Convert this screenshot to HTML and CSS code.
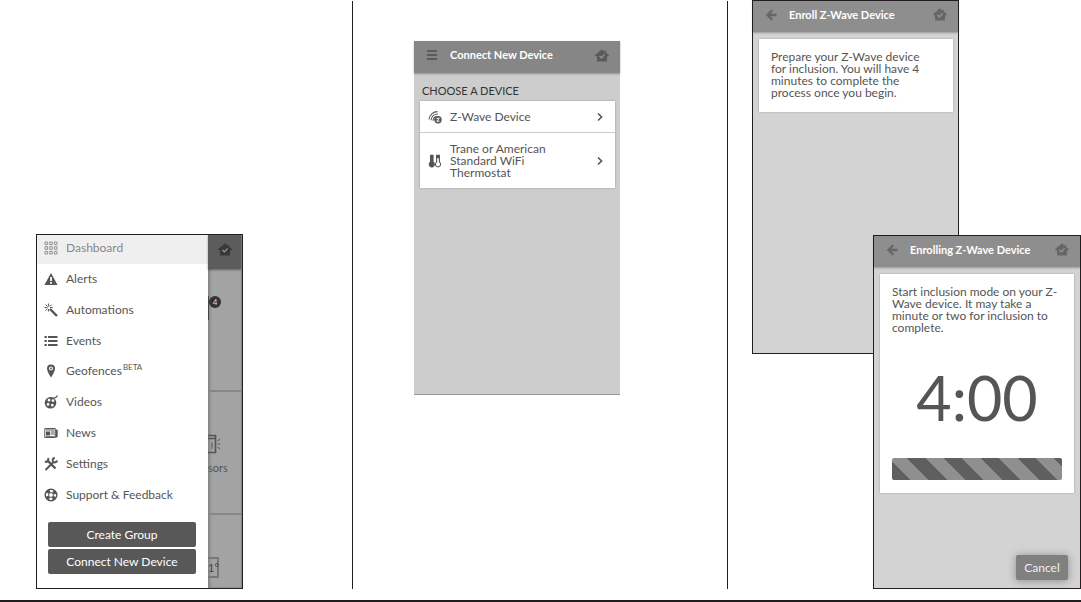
FILE: index.html
```
<!DOCTYPE html>
<html lang="en">
<head>
  <meta charset="UTF-8">
  <meta name="viewport" content="width=device-width, initial-scale=1.0">
  <title>Enroll a Z-Wave Device</title>
  <link rel="stylesheet" href="styles.css">
</head>
<body>

<!-- Shared icons -->
<svg class="sprite" aria-hidden="true">
  <symbol id="home" viewBox="0 0 14 13">
    <path fill="currentColor" d="M7 .300.200 6v1.200H2v5.300h10V7.200h1.800V6L11 3.700V1.800H9.800v.9z"/>
    <path class="check" d="M4.500 7 6.400 8.800 9.600 5.400"/>
  </symbol>
  <symbol id="back" viewBox="0 0 12 12">
    <path fill="currentColor" d="M6.500.500 8 2 5.400 4.700H11.500v2.600H5.400L8 10 6.500 11.500.800 6z"/>
  </symbol>
  <symbol id="chevron" viewBox="0 0 6 10">
    <path fill="none" stroke="currentColor" stroke-width="1.600" d="M1 1.500 4.600 5 1 8.500"/>
  </symbol>
</svg>

<main class="steps">

  <section class="step step-menu">
    <div class="phone framed menu-phone">
      <div class="drawer">
        <nav class="menu">
          <a class="active" href="#dashboard">
            <svg viewBox="0 0 14 14"><g fill="none" stroke="currentColor" stroke-width="0.900"><path d="M1 1h2.600v2.600H1zM5.700 1h2.600v2.600H5.700zM10.400 1H13v2.600h-2.600zM1 5.700h2.600v2.600H1zM5.700 5.700h2.600v2.600H5.700zM10.400 5.700H13v2.600h-2.600zM1 10.400h2.600V13H1zM5.700 10.400h2.600V13H5.700zM10.400 10.400H13V13h-2.600z"/></g></svg>
            <span>Dashboard</span>
          </a>
          <a href="#alerts">
            <svg viewBox="0 0 14 14"><path fill="currentColor" fill-rule="evenodd" d="M7 1 13.600 13H.400zM6.100 5v4h1.800V5zM6.100 10v1.700h1.800V10z"/></svg>
            <span>Alerts</span>
          </a>
          <a href="#automations">
            <svg viewBox="0 0 14 14"><g stroke="currentColor" fill="none"><path stroke-width="2.400" d="M6 6l7 7"/><path stroke-width="1" d="M4.600.500v3M.500 4.600h3M1.600 1.600l2 2M7.700 1.600l-2 2M1.600 7.700l2-2M4.600 6v2.500M6 4.600h2.700"/></g></svg>
            <span>Automations</span>
          </a>
          <a href="#events">
            <svg viewBox="0 0 14 14"><path fill="currentColor" d="M.500 2h2.300v2H.500zM4 2h9.500v2H4zM.500 6h2.300v2H.500zM4 6h9.500v2H4zM.500 10h2.300v2H.500zM4 10h9.500v2H4z"/></svg>
            <span>Events</span>
          </a>
          <a href="#geofences">
            <svg viewBox="0 0 14 14"><path fill="currentColor" fill-rule="evenodd" d="M7 .500a4 4 0 0 0-4 4C3 7.600 7 13.500 7 13.500s4-5.900 4-9a4 4 0 0 0-4-4zM7 2.500a2 2 0 1 1 0 4 2 2 0 0 1 0-4z"/><circle cx="7" cy="4.500" r="0.900" fill="currentColor"/></svg>
            <span>Geofences<sup>BETA</sup></span>
          </a>
          <a href="#videos">
            <svg viewBox="0 0 14 14"><path fill="currentColor" fill-rule="evenodd" d="M6.500 2a5.800 5.800 0 1 0 0 11.600A5.800 5.800 0 0 0 6.500 2zM5 3.800a1.400 1.400 0 1 1 0 2.800 1.400 1.400 0 0 1 0-2.800zM9 4.200A1.400 1.400 0 1 1 9 7a1.400 1.400 0 0 1 0-2.800zM4 8a1.400 1.400 0 1 1 0 2.800A1.400 1.400 0 0 1 4 8zM8.300 8.800a1.400 1.400 0 1 1 0 2.800 1.400 1.400 0 0 1 0-2.800z"/><path fill="none" stroke="currentColor" stroke-width="1.300" d="M8.500 2.800c2 .8 3.600 0 5-2.200"/></svg>
            <span>Videos</span>
          </a>
          <a href="#news">
            <svg viewBox="0 0 14 14"><path fill="none" stroke="currentColor" d="M.800 2.500h10.400v9H.800zM11.200 4h2v6.500c0 1-2 1-2 0"/><path fill="currentColor" d="M2 5.500h4.200v4H2zM7 5.500h3.200v1H7zM7 7.500h3.200v1H7zM2 3.500h8.200v1H2zM2 10h8.200v.8H2zM11.500 4h1.500v7h-1.500z"/></svg>
            <span>News</span>
          </a>
          <a href="#settings">
            <svg viewBox="0 0 14 14"><g fill="none" stroke="currentColor"><path stroke-width="2.400" d="M3 3l8.500 8.500"/><path stroke-width="2" d="M10 4.500 1.500 13"/><path stroke-width="2" d="M13 3.500a2.200 2.200 0 0 1-3.300 1.600A2.200 2.200 0 0 1 10.800 1M1 4.400c1.600 1.300 4 0 3.200-3.400"/></g></svg>
            <span>Settings</span>
          </a>
          <a href="#support">
            <svg viewBox="0 0 14 14"><g fill="none" stroke="currentColor"><circle cx="7" cy="7" r="5.800" stroke-width="1.400"/><circle cx="7" cy="7" r="2.400" stroke-width="1"/><circle cx="7" cy="7" r="4.300" stroke-width="3.600" stroke-dasharray="3.380 3.380" stroke-dashoffset="-1.690"/></g></svg>
            <span>Support &amp; Feedback</span>
          </a>
        </nav>
        <div class="drawer-buttons">
          <button type="button">Create Group</button>
          <button type="button">Connect New Device</button>
        </div>
      </div>

      <!-- Dimmed dashboard behind the drawer -->
      <div class="behind">
        <div class="behind-bar"><svg class="home"><use href="#home"/></svg></div>
        <div class="tile tile-alerts">
          <span class="stub"></span>
          <span class="count">4</span>
        </div>
        <div class="tile tile-sensors">
          <svg viewBox="0 0 14 20"><path fill="none" stroke="currentColor" stroke-width="1.600" d="M0 1.500h7.500v17H0M0 4.500h7"/><path stroke="currentColor" d="M4 8.500v6M9.500 6.500l2.500-1M9.500 10H12M9.500 13.500l2.500 1"/></svg>
          <span>sors</span>
        </div>
        <div class="tile tile-climate"><span class="temp">1°</span></div>
      </div>
    </div>
  </section>

  <section class="step step-connect">
    <div class="phone connect-phone">
      <header class="bar">
        <button type="button" class="bar-icon" aria-label="Menu">
          <svg viewBox="0 0 12 12"><path fill="currentColor" d="M1 1h10v2H1zM1 5h10v2H1zM1 9h10v2H1z"/></svg>
        </button>
        <h1>Connect New Device</h1>
        <svg class="home"><use href="#home"/></svg>
      </header>
      <h2>CHOOSE A DEVICE</h2>
      <div class="card device-list">
        <a href="#zwave">
          <svg class="device-icon" viewBox="0 0 14 14"><g fill="none" stroke="currentColor" stroke-width="1.100"><path d="M1 9.500C1.500 4.800 5 1.600 9.500 1.600M3 10.300c.4-3.700 3.200-6.300 6.900-6.300M5 10.800c.2-2.400 1.800-4.300 4.300-4.600"/></g><circle cx="10" cy="9.700" r="3.700" fill="currentColor"/><path fill="none" stroke="#fff" stroke-width="1" d="M8.500 8.300h2.800L8.700 11.200h2.800"/></svg>
          <span>Z-Wave Device</span>
          <svg class="chevron"><use href="#chevron"/></svg>
        </a>
        <a href="#thermostat">
          <svg class="device-icon" viewBox="0 0 14 14"><path fill="currentColor" d="M2 .800h3.600v7a3.100 3.100 0 1 1-3.600 0z"/><path fill="none" stroke="currentColor" stroke-width="1.100" d="M8.600 1.300h2.800v6.800a2.600 2.600 0 1 1-2.800 0z"/><path fill="currentColor" d="M8.600 1.300h2.800v3H8.600z"/></svg>
          <span>Trane or American Standard WiFi Thermostat</span>
          <svg class="chevron"><use href="#chevron"/></svg>
        </a>
      </div>
    </div>
  </section>

  <section class="step step-enroll">
    <div class="phone framed light">
      <header class="bar">
        <button type="button" class="bar-icon" aria-label="Back"><svg><use href="#back"/></svg></button>
        <h1>Enroll Z-Wave Device</h1>
        <svg class="home"><use href="#home"/></svg>
      </header>
      <div class="card message prepare">
        <p>Prepare your Z-Wave device for inclusion. You will have 4 minutes to complete the process once you begin.</p>
      </div>
    </div>

    <div class="phone framed light enrolling">
      <header class="bar">
        <button type="button" class="bar-icon" aria-label="Back"><svg><use href="#back"/></svg></button>
        <h1>Enrolling Z-Wave Device</h1>
        <svg class="home"><use href="#home"/></svg>
      </header>
      <div class="card message">
        <p>Start inclusion mode on your Z-Wave device. It may take a minute or two for inclusion to complete.</p>
        <div class="timer">4:00</div>
        <div class="progress" role="progressbar" aria-label="Time remaining"></div>
      </div>
      <button type="button" class="cancel">Cancel</button>
    </div>
  </section>

</main>

</body>
</html>
```
FILE: styles.css
```
* {
  box-sizing: border-box;
}

body {
  margin: 0;
  background-color: white;
  color: #555;
  font-family: Lato, "Liberation Sans", sans-serif;
  font-size: 12px;
  line-height: 12px;
}

h1, h2, p {
  margin: 0;
  font-weight: normal;
}

a {
  color: inherit;
  text-decoration: none;
}

button {
  padding: 0;
  border: 0;
  font: inherit;
  cursor: pointer;
}

svg {
  display: block;
  flex: none;
}

.sprite {
  position: absolute;
  width: 0;
  height: 0;
}

.check {
  fill: none;
  stroke: #999;
  stroke-width: 1.2;
}

/* Three steps side by side */
.steps {
  display: grid;
  grid-template-columns: 352fr 375fr 354fr;
  padding-bottom: 11px;
  border-bottom: 2px solid #231a20;
}

.step + .step {
  border-left: 1px solid #231f20;
  border-image: linear-gradient(transparent 2px, #231f20 2px) 1;
}

.step-menu {
  padding: 234px 0 0 36px;
}

.step-connect {
  padding: 41px 0 0 61px;
}

.step-enroll {
  padding-left: 24px;
}

.phone {
  display: flex;
  flex-direction: column;
  width: 206px;
  height: 354px;
  background-color: #cdcdcd;
}

.framed {
  width: 207px;
  height: 355px;
  border: 1px solid #231f20;
}

.light {
  height: 354px;
  background-color: #d3d3d3;
}

.connect-phone {
  border-bottom: 1px solid #999;
}

/* Drawer */
.menu-phone {
  flex-direction: row;
  overflow: hidden;
}

.drawer {
  width: 171px;
  background-color: white;
}

.menu {
  display: grid;
  grid-auto-rows: 1fr;
  height: 277px;
  margin-top: -2px;
}

.menu a {
  display: flex;
  align-items: center;
  gap: 8px;
  padding-left: 7px;
}

.menu svg {
  width: 14px;
  height: 14px;
}

.menu .active {
  background-color: #efefef;
  color: #888;
}

.menu sup {
  margin-left: 1px;
  font-size: 8px;
  line-height: 0;
}

.drawer-buttons {
  display: grid;
  gap: 2px;
  padding: 12px 12px 0 11px;
}

.drawer-buttons button {
  height: 25px;
  border-radius: 2px;
  background-color: #585858;
  color: white;
}

.behind {
  display: flex;
  flex: 1;
  flex-direction: column;
  border-right: 1px solid #888;
  background-color: #a3a3a3;
  box-shadow: inset 2px 0 3px rgba(0, 0, 0, 0.2);
}

.behind-bar {
  height: 34px;
  padding: 8px 0 0 10px;
  background-color: #5c5c5c;
  box-shadow: 0 1px 2px rgba(0, 0, 0, 0.4);
  color: #383838;
}

.behind-bar .check {
  stroke: #777;
}

.tile {
  flex: none;
  height: 123px;
  border-bottom: 2px solid #878787;
  color: #555;
}

.tile-alerts {
  display: flex;
  align-items: flex-start;
  padding-top: 27px;
}

.stub {
  width: 1px;
  height: 24px;
  background-color: #444;
}

.count {
  width: 12px;
  height: 12px;
  border-radius: 50%;
  background-color: #333;
  color: #ddd;
  font-size: 8px;
  text-align: center;
}

.tile-sensors {
  padding-top: 42px;
  font-size: 11px;
}

.tile-sensors svg {
  width: 14px;
  height: 20px;
  margin-bottom: 8px;
}

.tile-climate {
  height: auto;
  padding-top: 42px;
  border-bottom: 0;
}

.temp {
  display: block;
  width: 11px;
  border: 2px solid #777;
  border-left: 0;
  color: #444;
  font-size: 11px;
  line-height: 17px;
}

/* Screens */
.bar {
  display: flex;
  align-items: center;
  flex: none;
  height: 32px;
  padding: 0 11px 4px 12px;
  background-color: #868686;
  box-shadow: 0 1px 2px rgba(0, 0, 0, 0.3);
  color: #5a5a5a;
}

.light .bar {
  height: 31px;
  background-color: #8e8e8e;
  color: #666;
}

.bar h1 {
  flex: 1;
  margin-left: 12px;
  color: white;
  font-size: 11px;
  font-weight: bold;
  white-space: nowrap;
}

.bar-icon {
  background: none;
  color: inherit;
}

.bar-icon svg {
  width: 12px;
  height: 12px;
}

.home {
  width: 14px;
  height: 13px;
}

h2 {
  margin: 12px 8px 4px;
  color: #333;
  font-size: 11px;
}

.card {
  margin: 0 5px 0 6px;
  background-color: white;
  box-shadow: 0 0 2px rgba(0, 0, 0, 0.25);
}

.device-list a {
  display: flex;
  align-items: center;
  min-height: 31px;
  padding: 0 12px 0 8px;
}

.device-list a + a {
  min-height: 56px;
  border-top: 1px solid #ccc;
}

.device-list span {
  flex: 1;
  margin-left: 8px;
  padding-right: 30px;
}

.device-icon {
  width: 14px;
  height: 14px;
}

.chevron {
  width: 6px;
  height: 10px;
}

.message {
  margin: 7px 6px 0;
  padding: 12px 12px 13px;
}

.prepare {
  margin-right: 5px;
  padding-right: 24px;
}

/* Overlaps the previous screen's lower corner */
.enrolling {
  width: 208px;
  margin: -119px 0 0 auto;
  position: relative;
}

.timer {
  margin-top: 33px;
  font-size: 61px;
  line-height: 61px;
  text-align: center;
}

.progress {
  height: 22px;
  margin-top: 30px;
  border-radius: 2px;
  background: repeating-linear-gradient(45deg, #5f5f5f 0, #5f5f5f 13px, #8f8f8f 13px, #8f8f8f 26px);
}

.cancel {
  align-self: flex-end;
  width: 52px;
  height: 25px;
  margin: auto 12px 8px 0;
  border-radius: 2px;
  background-color: #808080;
  box-shadow: 0 1px 8px rgba(0, 0, 0, 0.35);
  color: #eee;
}
```
